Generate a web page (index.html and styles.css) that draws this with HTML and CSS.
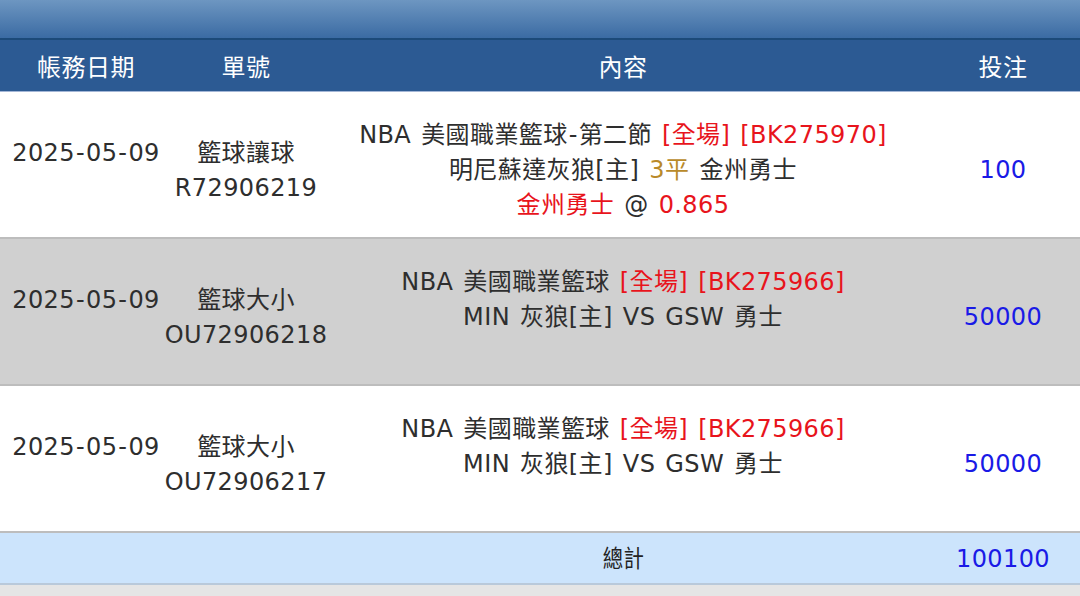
FILE: index.html
```html
<!DOCTYPE html>
<html lang="zh-Hant">
<head>
<meta charset="utf-8">
<link rel="stylesheet" href="styles.css">
</head>
<body>
<div class="topbar"></div>
<div class="table">
  <div class="row head">
    <div class="cell">帳務日期</div>
    <div class="cell">單號</div>
    <div class="cell">內容</div>
    <div class="cell">投注</div>
  </div>
  <div class="row odd">
    <div class="cell"><div>2025<span class="hy">-</span>05<span class="hy">-</span>09</div><div>&nbsp;</div></div>
    <div class="cell"><div>籃球讓球</div><div>R72906219</div></div>
    <div class="cell">
      <div>NBA 美國職業籃球<span class="hy">-</span>第二節 <span class="red">[全場] [BK275970]</span></div>
      <div>明尼蘇達灰狼[主] <span class="gold">3平</span> 金州勇士</div>
      <div><span class="red">金州勇士</span> @ <span class="red">0.865</span></div>
    </div>
    <div class="cell blue">100</div>
  </div>
  <div class="row even">
    <div class="cell"><div>2025<span class="hy">-</span>05<span class="hy">-</span>09</div><div>&nbsp;</div></div>
    <div class="cell"><div>籃球大小</div><div>OU72906218</div></div>
    <div class="cell">
      <div>NBA 美國職業籃球 <span class="red">[全場] [BK275966]</span></div>
      <div>MIN 灰狼[主] VS GSW 勇士</div>
      <div>&nbsp;</div>
    </div>
    <div class="cell blue">50000</div>
  </div>
  <div class="row odd">
    <div class="cell"><div>2025<span class="hy">-</span>05<span class="hy">-</span>09</div><div>&nbsp;</div></div>
    <div class="cell"><div>籃球大小</div><div>OU72906217</div></div>
    <div class="cell">
      <div>NBA 美國職業籃球 <span class="red">[全場] [BK275966]</span></div>
      <div>MIN 灰狼[主] VS GSW 勇士</div>
      <div>&nbsp;</div>
    </div>
    <div class="cell blue">50000</div>
  </div>
  <div class="row total">
    <div class="cell"></div>
    <div class="cell"></div>
    <div class="cell"><span class="narrow">總計</span></div>
    <div class="cell blue">100100</div>
  </div>
</div>
</body>
</html>
```
FILE: styles.css
```css
html, body {
  margin: 0;
  padding: 0;
}
body {
  background: #e5e5e5;
  font-family: "DejaVu Sans", "Noto Sans CJK TC", sans-serif;
  font-size: 24px;
  color: #2e2e2e;
  width: 1080px;
  overflow: hidden;
}
.topbar {
  height: 38px;
  background: linear-gradient(#6d96c1, #3b6ba3);
}
.row {
  display: grid;
  grid-template-columns: 172px 148px 606px 154px;
}
.cell {
  display: flex;
  flex-direction: column;
  justify-content: center;
  align-items: center;
  text-align: center;
  line-height: 35px;
  white-space: nowrap;
  letter-spacing: 0.4px;
  word-spacing: 2px;
}
.hy {
  margin: 0 1px;
}
.head {
  height: 45px;
  padding-top: 6px;
  background: #2c5a93;
  border-top: 2px solid #1c4a79;
  border-bottom: 1px solid #a3b6d6;
  color: #ffffff;
}
.head .cell {
  letter-spacing: 0.5px;
}
.odd, .even {
  box-sizing: border-box;
  height: 147px;
  padding-top: 12px;
  border-bottom: 2px solid #bdbdbd;
}
.odd { background: #ffffff; }
.even { background: #d0d0d0; }
.total {
  box-sizing: border-box;
  height: 52px;
  padding-top: 2px;
  background: #cce4fc;
  border-bottom: 2px solid #b9c9da;
}
.red { color: #e8141c; }
.gold { color: #b98a2a; }
.blue { color: #1a1ae6; }
.narrow {
  display: inline-block;
  transform: scaleX(0.85);
  color: #222222;
}
```
